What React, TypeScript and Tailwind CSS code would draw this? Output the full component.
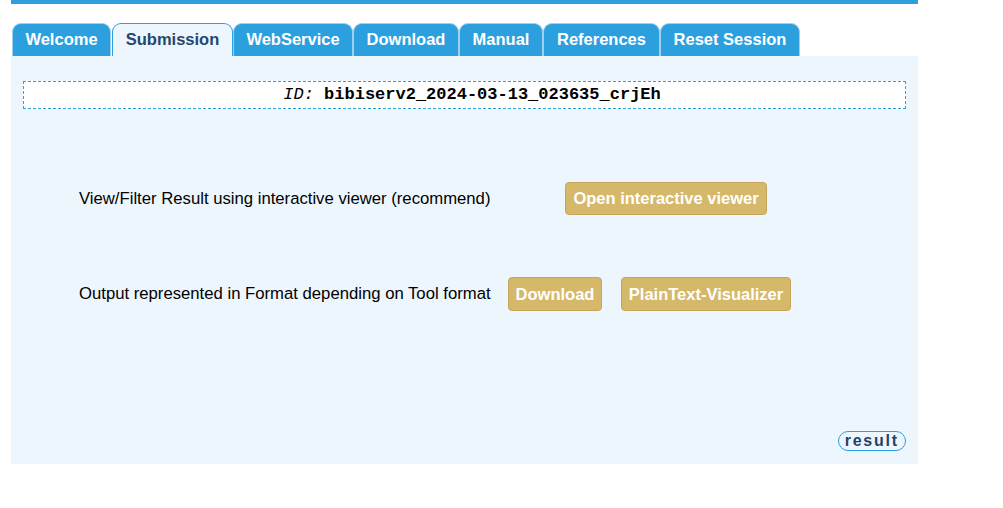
import React from "react";

const tabs: [string, string][] = [
  ["Welcome", "w-[99px]"],
  ["Submission", "w-[121px]"],
  ["WebService", "w-[120px]"],
  ["Download", "w-[106px]"],
  ["Manual", "w-[84px]"],
  ["References", "w-[117px]"],
  ["Reset Session", "w-[140px]"],
];

export default function App() {
  return (
    <div className="w-[1003px] h-[508px] bg-white" style={{ fontFamily: '"Liberation Sans", Arial, sans-serif' }}>
      <div className="ml-[11px] w-[907px]">
        <div className="h-[4px] bg-[#2c9fdf]" />
        <div className="flex pl-[1px] mt-[19px] h-[33px]">
          {tabs.map(([t, w]) =>
            t === "Submission" ? (
              <div
                key={t}
                className={`${w} h-[33px] pb-[2px] flex items-center justify-center rounded-t-[9px] border border-b-0 border-[#2c9fdf] bg-[#eef6fd] text-[#26466d] font-bold text-[16.5px] ml-[1px] whitespace-nowrap`}
              >
                {t}
              </div>
            ) : (
              <div
                key={t}
                className={`${w} h-[33px] pb-[2px] flex items-center justify-center rounded-t-[9px] border border-b-0 border-[#9fd0f0] bg-[#2c9fdf] text-white font-bold text-[16.5px] whitespace-nowrap`}
              >
                {t}
              </div>
            )
          )}
        </div>
        <div className="h-[408px] bg-[#eef6fd] flex flex-col">
          <div
            className="mx-[12px] mt-[25px] h-[28px] bg-white border border-dashed border-[#2c9fdf] flex items-center justify-center pl-[15px] text-[17px] text-black"
            style={{ fontFamily: '"Liberation Mono", "Courier New", monospace' }}
          >
            <span className="italic">ID:</span>
            <span>&nbsp;</span>
            <span className="font-bold">bibiserv2_2024-03-13_023635_crjEh</span>
          </div>
          <div className="flex items-center mt-[73px] pl-[68px] h-[33px]">
            <div className="w-[411px] text-[16.7px] text-black whitespace-nowrap">View/Filter Result using interactive viewer (recommend)</div>
            <button className="ml-[75px] w-[202px] h-[33px] bg-[#d5b869] border border-[#c4a55c] rounded-[4px] text-white font-bold text-[16.5px] whitespace-nowrap">
              Open interactive viewer
            </button>
          </div>
          <div className="flex items-center mt-[62px] pl-[68px] h-[34px]">
            <div className="w-[411px] text-[16.7px] text-black whitespace-nowrap">Output represented in Format depending on Tool format</div>
            <button className="ml-[18px] w-[94px] h-[34px] bg-[#d5b869] border border-[#c4a55c] rounded-[4px] text-white font-bold text-[16.5px] whitespace-nowrap">
              Download
            </button>
            <button className="ml-[19px] w-[170px] h-[34px] bg-[#d5b869] border border-[#c4a55c] rounded-[4px] text-white font-bold text-[16.5px] whitespace-nowrap">
              PlainText-Visualizer
            </button>
          </div>
          <div className="mt-auto mb-[13px] mr-[12px] self-end h-[20px] px-[6px] flex items-center rounded-full border border-[#2c9fdf] text-[#1f446c] font-bold text-[16px] tracking-[1.8px] leading-none">
            result
          </div>
        </div>
      </div>
    </div>
  );
}
